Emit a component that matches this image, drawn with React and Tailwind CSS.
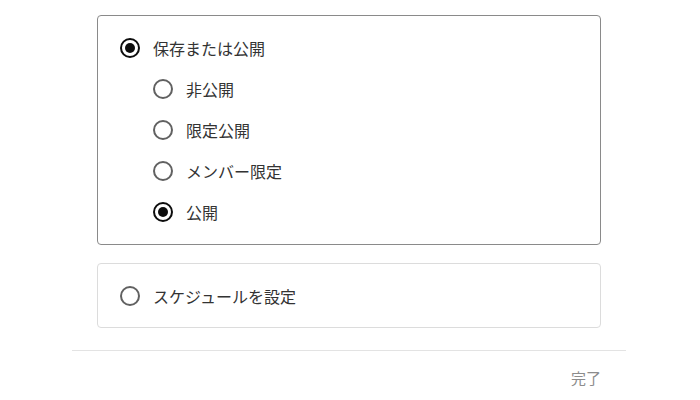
import { useState } from 'react'

function Radio({ checked }) {
  return (
    <span
      className={
        'flex h-5 w-5 shrink-0 items-center justify-center rounded-full border-2 ' +
        (checked ? 'border-[#0d0d0d]' : 'border-[#616161]')
      }
    >
      {checked && <span className="h-2.5 w-2.5 rounded-full bg-[#0d0d0d]" />}
    </span>
  )
}

function Option({ label, checked, onClick }) {
  return (
    <button type="button" onClick={onClick} className="flex h-[41px] items-center gap-[13px] text-left">
      <Radio checked={checked} />
      <span className="text-[16px] text-[#333]">{label}</span>
    </button>
  )
}

export default function App() {
  const [mode, setMode] = useState('publish')
  const [visibility, setVisibility] = useState('public')

  const levels = [
    ['private', '非公開'],
    ['unlisted', '限定公開'],
    ['members', 'メンバー限定'],
    ['public', '公開'],
  ]

  return (
    <div
      className="h-[400px] w-[700px] bg-white"
      style={{ fontFamily: '"Noto Sans CJK JP", "Noto Sans", sans-serif' }}
    >
      <div className="flex flex-col pl-[97px] pr-[99px] pt-[15px]">
        <div className="flex flex-col rounded border border-[#8a8a8a] px-[22px] pt-[11px] pb-[12px]">
          <Option label="保存または公開" checked={mode === 'publish'} onClick={() => setMode('publish')} />
          <div className="flex flex-col pl-[33px]">
            {levels.map(([key, label]) => (
              <Option
                key={key}
                label={label}
                checked={mode === 'publish' && visibility === key}
                onClick={() => {
                  setMode('publish')
                  setVisibility(key)
                }}
              />
            ))}
          </div>
        </div>
        <div className="mt-[18px] flex h-[65px] items-center rounded border border-[#dcdcdc] px-[22px]">
          <Option label="スケジュールを設定" checked={mode === 'schedule'} onClick={() => setMode('schedule')} />
        </div>
      </div>
      <div className="ml-[72px] mr-[74px] mt-[22px] border-t border-[#e3e3e3]" />
      <div className="flex justify-end pr-[99px] pt-[16px]">
        <button type="button" className="text-[15px] text-[#8c8c8c]">完了</button>
      </div>
    </div>
  )
}
